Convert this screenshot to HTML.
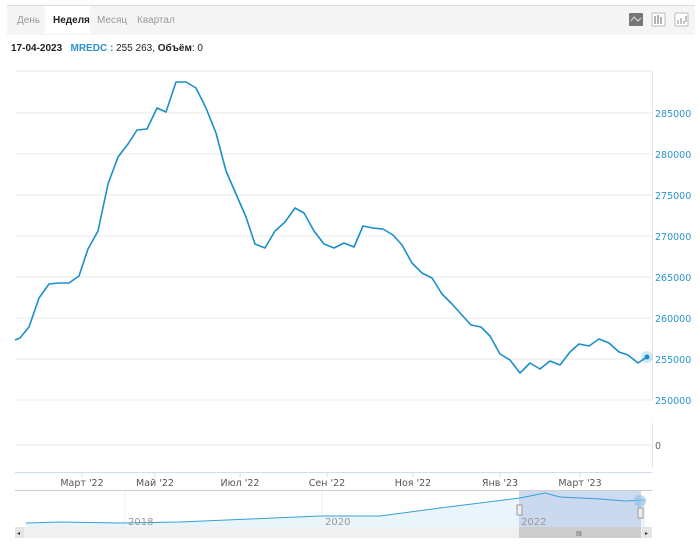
<!DOCTYPE html>
<html><head><meta charset="utf-8"><style>
body{margin:0;width:700px;height:550px;background:#fff;font-family:"Liberation Sans",Arial,sans-serif;position:relative;overflow:hidden}
.bar{position:absolute;left:7px;top:5px;width:688px;height:29px;background:#f5f5f5;border-top:1px solid #ddd}
.tab{position:absolute;top:10px;font-size:10px;color:#999}
.info{position:absolute;left:11px;top:43px;font-size:10px;color:#222}
</style></head><body>
<div class="bar"></div>
<div style="position:absolute;left:45px;top:6px;width:45px;height:28px;background:#fff"></div>
<div class="tab" style="left:17px;top:15px">День</div>
<div class="tab" style="left:53px;top:15px;color:#222;font-weight:bold">Неделя</div>
<div class="tab" style="left:97px;top:15px">Месяц</div>
<div class="tab" style="left:137px;top:15px">Квартал</div>
<div class="info"><b>17-04-2023</b> &nbsp; <b style="color:#2a93d0">MREDC :</b> 255 263, <b>Объём</b>: 0</div>
<svg width="700" height="550" style="position:absolute;left:0;top:0">
<rect x="629" y="13" width="14" height="13" fill="#777" rx="1"/>
<path d="M631 21 L634 17 L638 21 L641 18" stroke="#ddd" fill="none"/>
<rect x="652" y="13" width="13" height="13" fill="#fff" stroke="#bbb" rx="1"/>
<path d="M655 16v8M658 15v9M661 17v7" stroke="#666"/>
<rect x="675" y="13" width="13" height="13" fill="#fff" stroke="#bbb" rx="1"/>
<path d="M678 24v-4M681 24v-6M684 24v-3M686 22v-6" stroke="#888"/>
<g stroke="#eee" stroke-width="1.2">
<line x1="15" y1="71" x2="652" y2="71"/><line x1="15" y1="113" x2="652" y2="113"/><line x1="15" y1="154" x2="652" y2="154"/><line x1="15" y1="195" x2="652" y2="195"/><line x1="15" y1="236" x2="652" y2="236"/><line x1="15" y1="277" x2="652" y2="277"/><line x1="15" y1="318" x2="652" y2="318"/><line x1="15" y1="359" x2="652" y2="359"/><line x1="15" y1="400" x2="652" y2="400"/><line x1="15" y1="445" x2="652" y2="445"/>
</g>
<line x1="652.5" y1="71" x2="652.5" y2="400" stroke="#dde4f0"/>
<line x1="652.5" y1="423" x2="652.5" y2="468" stroke="#dde4f0"/>
<line x1="15" y1="472.5" x2="652" y2="472.5" stroke="#d0dcef"/>
<g stroke="#d0dcef"><line x1="82" y1="473" x2="82" y2="477"/><line x1="155" y1="473" x2="155" y2="477"/><line x1="240" y1="473" x2="240" y2="477"/><line x1="327" y1="473" x2="327" y2="477"/><line x1="413" y1="473" x2="413" y2="477"/><line x1="500" y1="473" x2="500" y2="477"/><line x1="580" y1="473" x2="580" y2="477"/></g>
<g font-size="9.5" fill="#2a93d0" font-family="DejaVu Sans,sans-serif">
<text x="655" y="117">285000</text><text x="655" y="158">280000</text><text x="655" y="199">275000</text><text x="655" y="240">270000</text><text x="655" y="281">265000</text><text x="655" y="322">260000</text><text x="655" y="363">255000</text><text x="655" y="404">250000</text>
</g>
<text x="655" y="449" font-size="9.5" fill="#666" font-family="DejaVu Sans,sans-serif">0</text>
<g font-size="9.5" fill="#555" text-anchor="middle" font-family="DejaVu Sans,sans-serif">
<text x="82" y="486">Март '22</text><text x="155" y="486">Май '22</text><text x="240" y="486">Июл '22</text><text x="327" y="486">Сен '22</text><text x="413" y="486">Ноя '22</text><text x="500" y="486">Янв '23</text><text x="580" y="486">Март '23</text>
</g>
<polyline fill="none" stroke="#1a8fc9" stroke-width="1.6" stroke-linejoin="round" points="15,340 20,338 29,327 39,298 49,284 59,283 69,283 79,276 88,249 98,231 108,184 118,157 128,144 137,130 147,129 157,108 166,112 176,82 186,82 196,88 206,108 216,133 226,171 236,194 246,217 255,244 265,248 275,231 285,222 295,208 304,213 314,231 324,244 334,248 344,243 354,247 363,226 373,228 383,229 393,235 402,245 412,263 422,273 432,278 442,294 452,304 461,314 471,325 481,327 490,336 500,354 510,360 520,373 530,363 540,369 550,361 560,365 570,352 579,344 589,346 599,339 609,343 619,352 628,355 638,363 647,357"/>
<circle cx="647" cy="357" r="6" fill="#1a8fc9" opacity="0.2"/><circle cx="647" cy="357" r="2.5" fill="#1a8fc9"/>
<line x1="15" y1="490.5" x2="652" y2="490.5" stroke="#ccc"/>
<line x1="125" y1="491" x2="125" y2="527" stroke="#eee"/><line x1="322" y1="491" x2="322" y2="527" stroke="#eee"/>
<path d="M26 523 L60 522 L120 523 L180 522 L250 519 L320 516 L380 516 L440 508 L520 498 L545 493 L560 497 L600 499 L625 501 L645 500 L645 527 L26 527Z" fill="#eaf4fb"/>
<rect x="519" y="491" width="122" height="36" fill="#c5d3ec" opacity="0.85"/>
<path d="M26 523 L60 522 L120 523 L180 522 L250 519 L320 516 L380 516 L440 508 L520 498 L545 493 L560 497 L600 499 L625 501 L645 500" fill="none" stroke="#35a0d6"/>
<g font-size="10" fill="#999" font-family="DejaVu Sans,sans-serif"><text x="128" y="525">2018</text><text x="325" y="525">2020</text><text x="521" y="525">2022</text></g>
<circle cx="640" cy="501" r="6" fill="#8fbfe6" opacity="0.6"/>
<rect x="517" y="505" width="5" height="10" fill="#eee" stroke="#999"/><rect x="638" y="508" width="5" height="10" fill="#eee" stroke="#999"/>
<rect x="15" y="527" width="637" height="11" fill="#f0f0f0"/>
<rect x="519" y="527" width="122" height="11" fill="#ccc"/>
<text x="576" y="536" font-size="7" fill="#555">III</text>
<rect x="15" y="527" width="9" height="11" fill="#e4e4e4"/><text x="17" y="535" font-size="6" fill="#333">◂</text>
<rect x="642" y="527" width="10" height="11" fill="#e4e4e4"/><text x="645" y="535" font-size="6" fill="#333">▸</text>
</svg>
</body></html>
